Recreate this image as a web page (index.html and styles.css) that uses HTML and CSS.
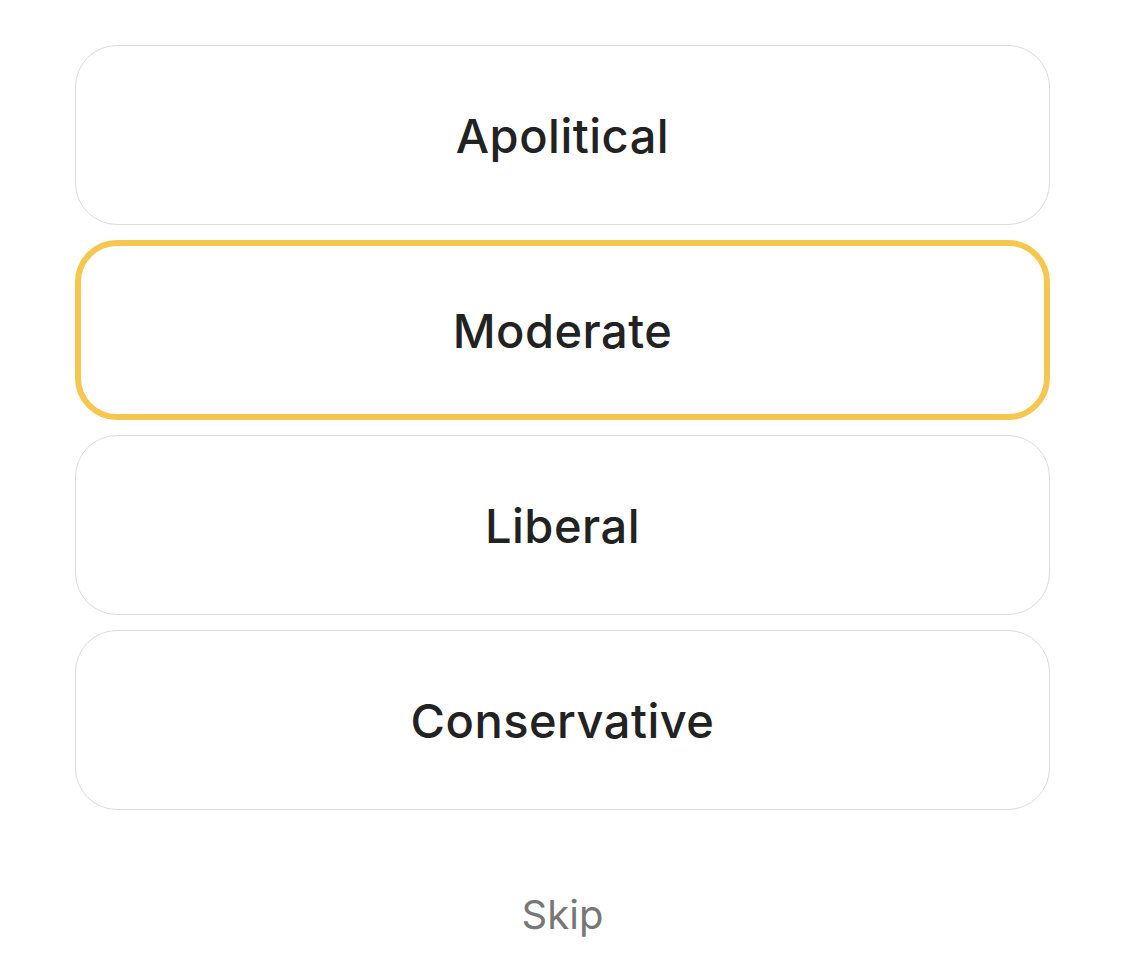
FILE: index.html
```html
<!DOCTYPE html>
<html lang="en">
<head>
	<meta charset="UTF-8">
	<title>Political views</title>
	<link rel="stylesheet" href="styles.css">
</head>
<body>
	<div id="page">
		<ul id="options">
			<li class="option">Apolitical</li>
			<li class="option active">Moderate</li>
			<li class="option">Liberal</li>
			<li class="option">Conservative</li>
		</ul>
		<div class="skip">Skip</div>
	</div>
</body>
</html>
```

FILE: styles.css
```css
* {padding: 0; margin: 0; box-sizing: border-box;}
li {list-style: none;}
body {background: #fff; font-family: Inter, "Noto Sans", sans-serif; color: #222;}
#page {padding: 45px 75px 0;}
#options {display: flex; flex-direction: column; gap: 15px;}
.option {height: 180px; border: 1px solid #dcdcdc; border-radius: 42px; display: flex; align-items: center; justify-content: center; font-size: 47px; font-weight: 500; letter-spacing: 0.5px;}
.option.active {border: 6px solid #f6c74f;}
.skip {margin-top: 80px; text-align: center; font-size: 40px; color: #777;}
```
